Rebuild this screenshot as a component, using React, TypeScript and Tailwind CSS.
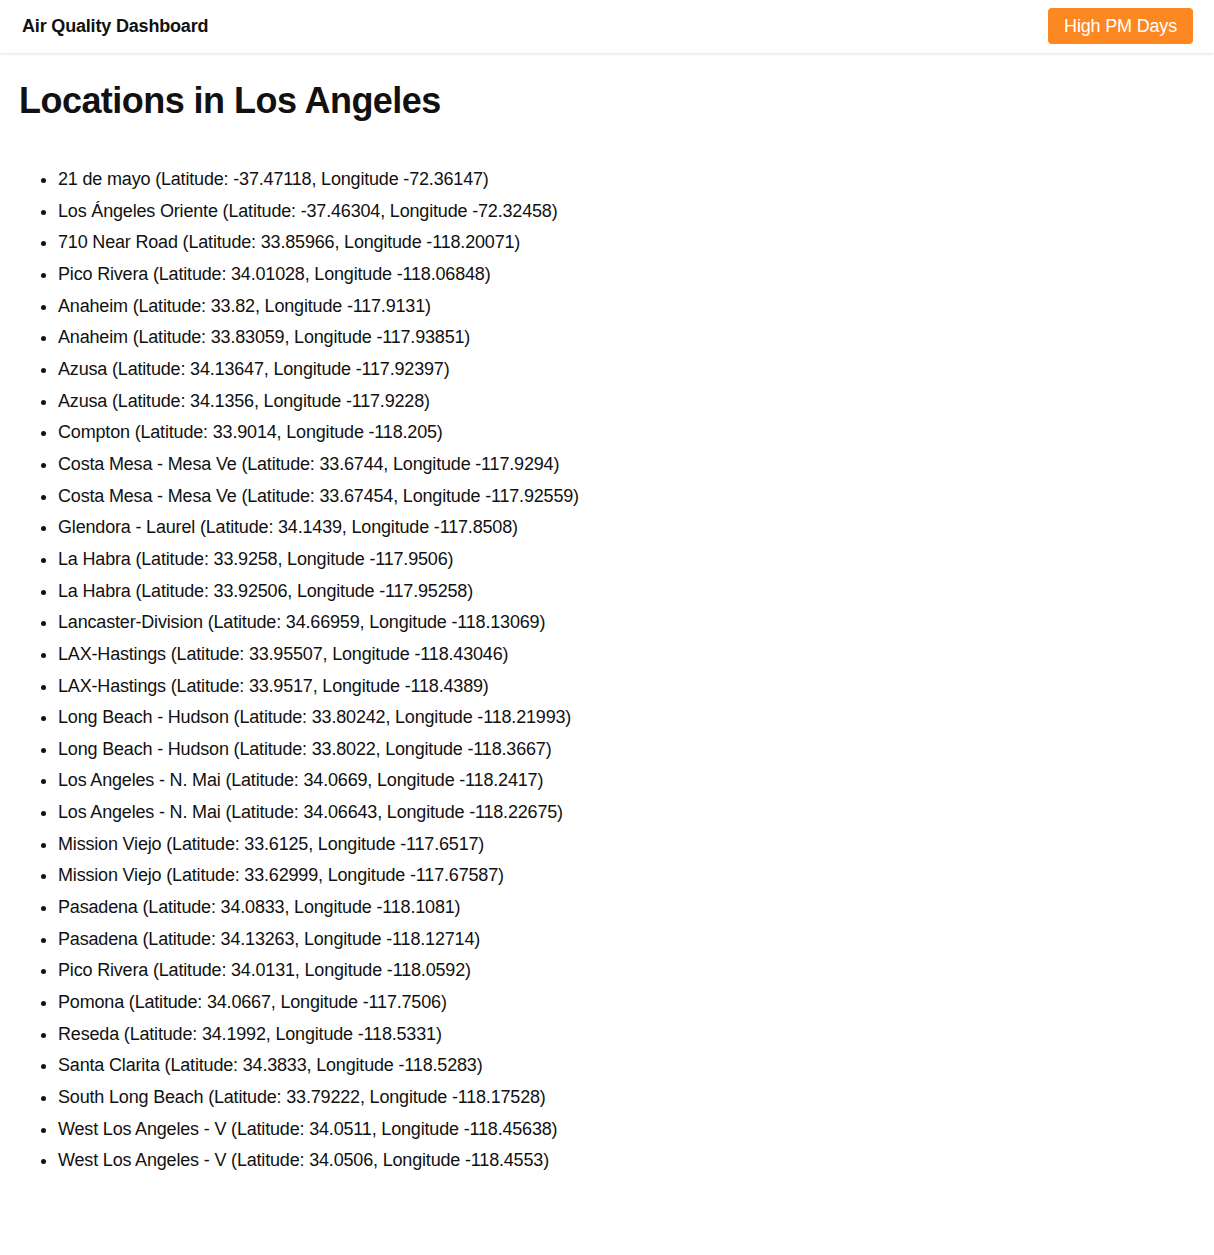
import React from "react";

const items: string[] = [
  "21 de mayo (Latitude: -37.47118, Longitude -72.36147)",
  "Los Ángeles Oriente (Latitude: -37.46304, Longitude -72.32458)",
  "710 Near Road (Latitude: 33.85966, Longitude -118.20071)",
  "Pico Rivera (Latitude: 34.01028, Longitude -118.06848)",
  "Anaheim (Latitude: 33.82, Longitude -117.9131)",
  "Anaheim (Latitude: 33.83059, Longitude -117.93851)",
  "Azusa (Latitude: 34.13647, Longitude -117.92397)",
  "Azusa (Latitude: 34.1356, Longitude -117.9228)",
  "Compton (Latitude: 33.9014, Longitude -118.205)",
  "Costa Mesa - Mesa Ve (Latitude: 33.6744, Longitude -117.9294)",
  "Costa Mesa - Mesa Ve (Latitude: 33.67454, Longitude -117.92559)",
  "Glendora - Laurel (Latitude: 34.1439, Longitude -117.8508)",
  "La Habra (Latitude: 33.9258, Longitude -117.9506)",
  "La Habra (Latitude: 33.92506, Longitude -117.95258)",
  "Lancaster-Division (Latitude: 34.66959, Longitude -118.13069)",
  "LAX-Hastings (Latitude: 33.95507, Longitude -118.43046)",
  "LAX-Hastings (Latitude: 33.9517, Longitude -118.4389)",
  "Long Beach - Hudson (Latitude: 33.80242, Longitude -118.21993)",
  "Long Beach - Hudson (Latitude: 33.8022, Longitude -118.3667)",
  "Los Angeles - N. Mai (Latitude: 34.0669, Longitude -118.2417)",
  "Los Angeles - N. Mai (Latitude: 34.06643, Longitude -118.22675)",
  "Mission Viejo (Latitude: 33.6125, Longitude -117.6517)",
  "Mission Viejo (Latitude: 33.62999, Longitude -117.67587)",
  "Pasadena (Latitude: 34.0833, Longitude -118.1081)",
  "Pasadena (Latitude: 34.13263, Longitude -118.12714)",
  "Pico Rivera (Latitude: 34.0131, Longitude -118.0592)",
  "Pomona (Latitude: 34.0667, Longitude -117.7506)",
  "Reseda (Latitude: 34.1992, Longitude -118.5331)",
  "Santa Clarita (Latitude: 34.3833, Longitude -118.5283)",
  "South Long Beach (Latitude: 33.79222, Longitude -118.17528)",
  "West Los Angeles - V (Latitude: 34.0511, Longitude -118.45638)",
  "West Los Angeles - V (Latitude: 34.0506, Longitude -118.4553)",
];

export default function App() {
  return (
    <div className="min-h-[1255px] bg-white text-[#111] tracking-[-0.011em] font-['Liberation_Sans',Arial,sans-serif]">
      <header className="flex h-[53px] items-start justify-between pl-[22px] pr-[21px] pt-[8px] shadow-[0_1px_3px_rgba(0,0,0,0.12)]">
        <div className="mt-[7px] text-[18px] font-bold leading-[22px]">Air Quality Dashboard</div>
        <button className="h-[36px] rounded-[4px] bg-[#fd8721] px-[16px] text-[18px] text-white">
          High PM Days
        </button>
      </header>
      <main className="px-[19px]">
        <h1 className="mt-[26px] text-[36px] font-bold leading-[44px] tracking-[-0.015em]">Locations in Los Angeles</h1>
        <ul className="mt-[41px] list-disc pl-[39px]">
          {items.map((t, i) => (
            <li key={i} className="text-[18px] leading-[31.66px]">
              {t}
            </li>
          ))}
        </ul>
      </main>
    </div>
  );
}
